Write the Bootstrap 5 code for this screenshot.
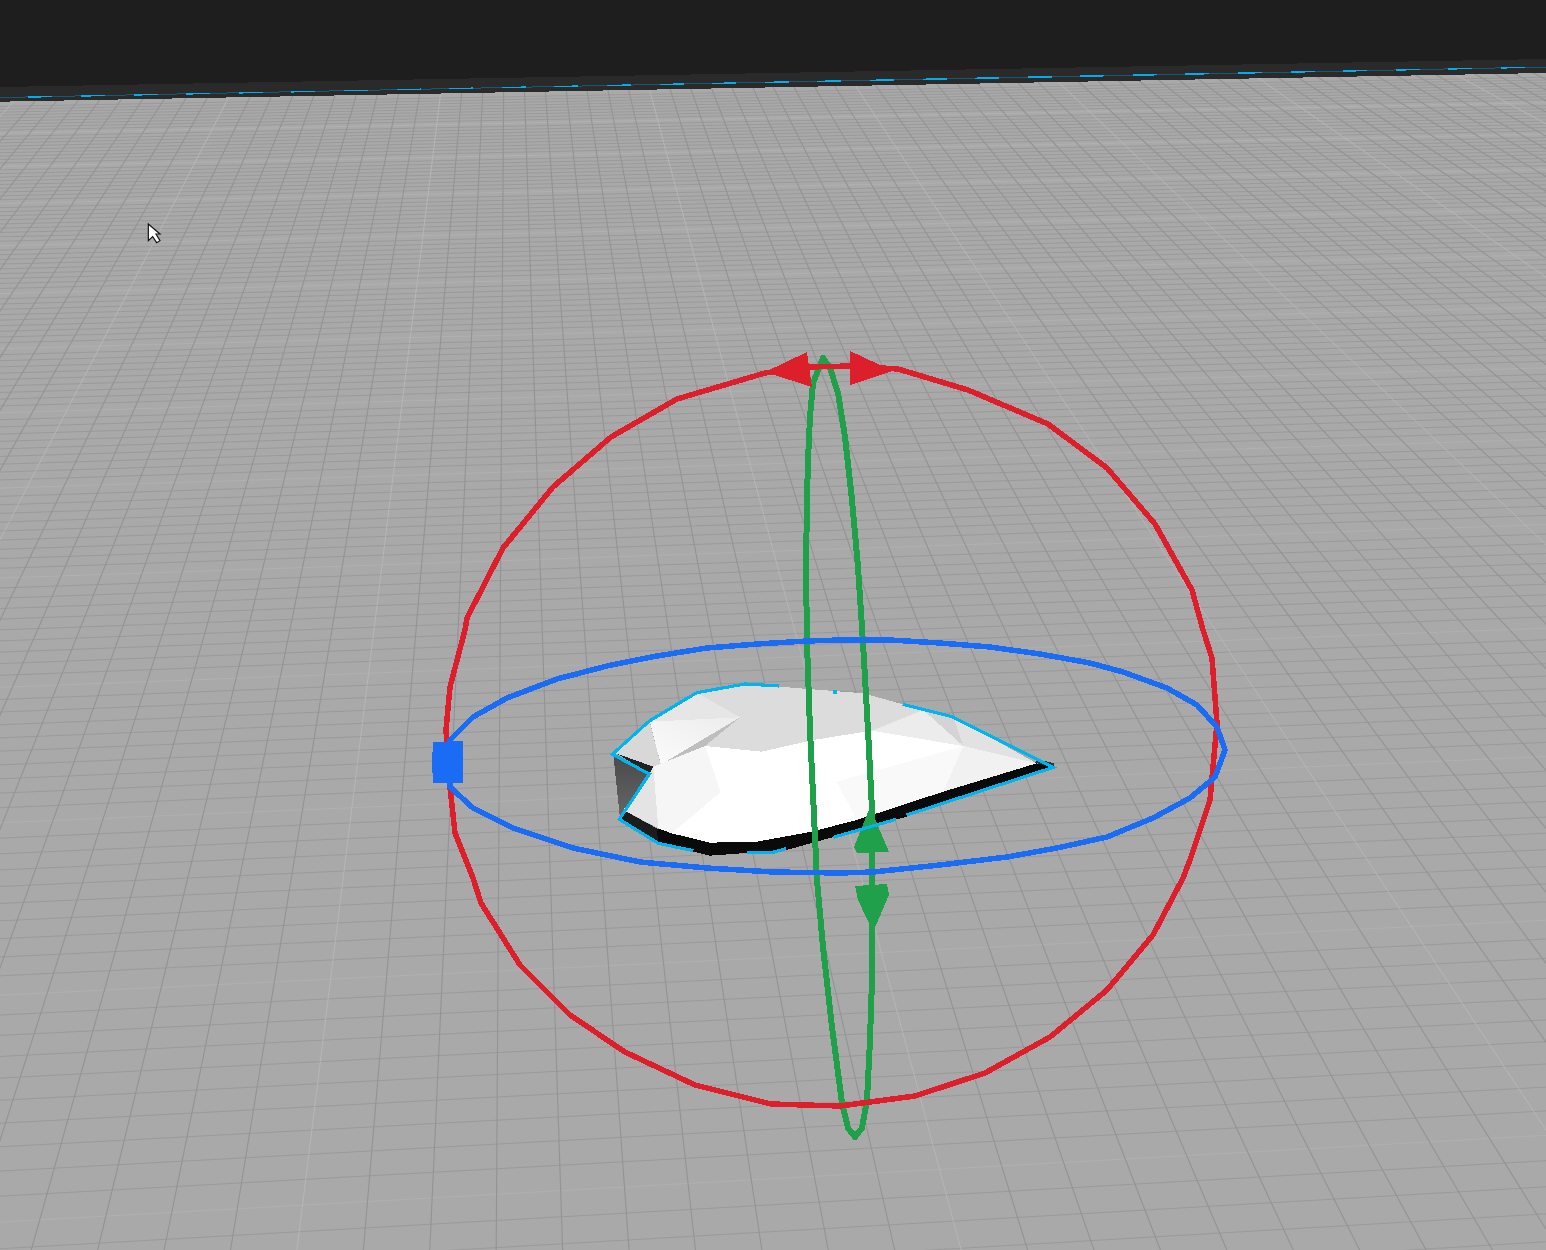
<!DOCTYPE html>
<html lang="en">
<head>
    <meta charset="UTF-8">
    <meta name="viewport" content="width=device-width, initial-scale=1">
    <title>3D Viewport</title>

    <!-- Bootstrap CSS -->
    <link href="https://cdn.jsdelivr.net/npm/bootstrap@5.3.0/dist/css/bootstrap.min.css" rel="stylesheet">

    <style>
        body { background-color: #1e1e1e; }
        .viewport-stage { width: 1546px; height: 1250px; }
        .viewport-svg { width: 1546px; height: 1250px; }
        .floor { fill: #a9a9a9; }
        .grid-across { stroke: #9a9a9a; stroke-width: 1; }
        .grid-across-major { stroke: #b2b2b2; stroke-width: 0.8; }
        .grid-away { stroke: #939393; stroke-width: 1.1; }
        .grid-away-major { stroke: #b8b8b8; stroke-width: 0.9; }
        .plate-top { fill: #1e1e1e; shape-rendering: crispEdges; }
        .plate-edge { fill: #2a2a2a; shape-rendering: crispEdges; }
        .edge-dim { stroke: #125a78; stroke-width: 1; fill: none; shape-rendering: crispEdges; }
        .edge-bright { stroke: #00aeef; stroke-width: 1.5; fill: none; stroke-dasharray: 24 28.6; shape-rendering: crispEdges; }
        .gizmo { fill: none; stroke-linejoin: round; shape-rendering: crispEdges; }
        .gizmo-red { stroke: #dc1f2a; stroke-width: 5.5; }
        .gizmo-blue { stroke: #1a6cf5; stroke-width: 5.5; }
        .gizmo-green { stroke: #21a04c; stroke-width: 6; }
        .fill-red { fill: #dc1f2a; shape-rendering: crispEdges; }
        .fill-blue { fill: #1a6cf5; shape-rendering: crispEdges; }
        .fill-green { fill: #21a04c; shape-rendering: crispEdges; }
        .mesh-face { shape-rendering: crispEdges; }
        .mesh-outline { fill: none; stroke: #00b4f0; stroke-width: 9.5; shape-rendering: crispEdges; stroke-linejoin: miter; }
    </style>
</head>
<body class="m-0 overflow-hidden">

    <div class="viewport-stage position-relative overflow-hidden">
        <svg class="viewport-svg d-block" viewBox="0 0 1546 1250" xmlns="http://www.w3.org/2000/svg">
            <defs>
                <linearGradient id="sideShade" x1="0" y1="0" x2="0" y2="1">
                    <stop offset="0" stop-color="#4a4a4a"></stop>
                    <stop offset="1" stop-color="#666"></stop>
                </linearGradient>
                <linearGradient id="creaseFace" x1="0" y1="1" x2="1" y2="0">
                    <stop offset="0" stop-color="#fbfbfb"></stop>
                    <stop offset="1" stop-color="#ececec"></stop>
                </linearGradient>
            </defs>
            <rect class="floor" x="0" y="60" width="1546" height="1190"></rect>
            <!-- grid lines get added here -->
            <g id="grid"></g>

            <!-- far edge of the plate -->
            <polygon class="plate-top" points="0,0 1546,0 1546,59 0,87"></polygon>
            <polygon class="plate-edge" points="0,87 1546,59 1546,73 0,101.7"></polygon>
            <line class="edge-dim" x1="0" y1="97.5" x2="1546" y2="67"></line>
            <line class="edge-bright" x1="28.5" y1="97" x2="1546" y2="67"></line>

            <!-- mesh, coordinates taken at 3x -->
            <g transform="translate(590 660) scale(0.33333)">
                <polygon class="mesh-face" fill="#0a0a0a" points="200,505 360,548 500,545 665,515 1340,310 1390,322 950,470 590,570 360,587 205,550"></polygon>
                <polygon class="mesh-face" fill="#1c1c1c" points="100,450 200,505 205,550 88,478"></polygon>
                <polygon class="mesh-face" fill="#222" points="72,275 85,262 190,320 178,342"></polygon>
                <polygon class="mesh-face" fill="url(#sideShade)" points="70,285 178,345 90,475"></polygon>
                <polygon class="mesh-face" fill="#333" points="1335,308 1345,298 1392,310 1390,322"></polygon>
                <polygon class="mesh-face" fill="#dcdcdc" points="320,98 465,72 820,100 1000,150 845,212 670,240 515,275 345,258 450,172"></polygon>
                <polygon class="mesh-face" fill="#e6e6e6" points="320,98 450,172 180,185"></polygon>
                <polygon class="mesh-face" fill="url(#creaseFace)" points="180,185 450,172 345,258 212,312"></polygon>
                <polygon class="mesh-face" fill="#bebebe" points="450,172 345,258 205,318"></polygon>
                <polygon class="mesh-face" fill="#d8d8d8" points="72,278 178,183 212,312 190,320"></polygon>
                <polygon class="mesh-face" fill="#ececec" points="845,212 1000,150 1120,258"></polygon>
                <polygon class="mesh-face" fill="#d4d4d4" points="1000,150 1090,170 1120,258"></polygon>
                <polygon class="mesh-face" fill="#e2e2e2" points="1090,170 1340,310 1120,258"></polygon>
                <polygon class="mesh-face" fill="#fff" points="245,520 392,397 345,258 515,275 670,240 845,212 1120,258 740,365 800,480 665,515 500,545 360,548"></polygon>
                <polygon class="mesh-face" fill="#f9f9f9" points="740,365 1120,258 1060,395 800,480"></polygon>
                <polygon class="mesh-face" fill="#f1f1f1" points="1120,258 1340,310 1060,395"></polygon>
                <polygon class="mesh-face" fill="#f6f6f6" points="190,320 345,258 392,397 245,520 205,505"></polygon>
                <polygon class="mesh-face" fill="#e4e4e4" points="178,342 190,320 205,505 100,450"></polygon>
            </g>

            <!-- green ring -->
            <polygon class="gizmo gizmo-green" points="823,358 813,383 810,417 808,460 807,500 806,567 807,643 810,730 817,880 823,947 832,1027 842,1103 848,1128 855,1137 862,1128 867,1100 870,1040 872,980 872,930 872,810 868,730 863,643 858,567 852,500 845,437 838,393 830,368"></polygon>
            <polygon class="fill-green" points="870,807 854,847 857,853 889,852"></polygon>
            <polygon class="fill-green" points="855,886 887,884 889,895 873,932 858,900"></polygon>

            <!-- red ring -->
            <polygon class="gizmo gizmo-red" points="450,687 465,630 467,618 503,548 553,487 611,437 677,399 765,373 810,367 850,366 898,369 968,390 1048,424 1107,468 1155,524 1192,590 1203,630 1212,658 1217,723 1210,800 1190,860 1183,878 1153,935 1107,990 1050,1037 985,1073 915,1096 840,1106 771,1104 695,1085 625,1052 570,1015 520,965 481,903 473,878 455,833 450,787 446,730"></polygon>
            <polygon class="fill-red" points="765,372 807,352 812,387"></polygon>
            <polygon class="fill-red" points="850,351 893,371 850,385"></polygon>

            <!-- blue ring -->
            <polygon class="gizmo gizmo-blue" points="450,740 473,717 507,698 557,679 607,666 657,656 707,648 757,644 807,641 840,640 890,640 940,643 990,647 1040,654 1090,663 1123,672 1167,688 1197,705 1217,727 1225,750 1215,777 1190,798 1153,818 1107,837 1057,848 1007,857 940,865 873,872 840,873 773,872 707,868 640,862 573,848 513,828 473,808 450,787"></polygon>
            <polygon class="fill-blue" points="433,742 463,741 463,783 433,783 432,762"></polygon>

            <!-- selection outline of the mesh, broken where it is hidden -->
            <g transform="translate(590 660) scale(0.33333)">
                <polyline class="mesh-outline" points="465,72 320,98 178,183 67,283 178,342 88,478 205,550 310,572"></polyline>
                <polyline class="mesh-outline" points="465,72 568,78"></polyline>
                <polyline class="mesh-outline" points="728,96 740,96"></polyline>
                <polyline class="mesh-outline" points="938,133 1085,170 1390,322 950,465"></polyline>
                <polyline class="mesh-outline" points="918,478 730,532"></polyline>
                <polyline class="mesh-outline" points="470,578 545,578 588,566"></polyline>
            </g>

            <!-- mouse pointer -->
            <g transform="translate(0 50) scale(0.33333)">
                <polygon fill="#fff" stroke="#111" stroke-width="3.5" points="445,522 445,572 458,560 470,578 480,572 468,552 480,552"></polygon>
            </g>
        </svg>
    </div>

    <script>
        // Perspective grid: both line families run to a vanishing point
        const grid = document.getElementById("grid");
        const svgNs = "http://www.w3.org/2000/svg";

        function addLine(x1, y1, x2, y2, cls) {
            const line = document.createElementNS(svgNs, "line");
            line.setAttribute("x1", x1);
            line.setAttribute("y1", y1);
            line.setAttribute("x2", x2);
            line.setAttribute("y2", y2);
            line.setAttribute("class", cls);
            grid.appendChild(line);
        }

        // Lines going across, spaced by inverse depth
        const acrossVp = { x: 30000, y: -460 };
        const horizon = 441;
        const uMajor = 6.013e-4;
        const uStep = 9.5e-6;
        for (let i = -10; i < 130; i++) {
            const u = uMajor + i * uStep;
            const y0 = 1 / u - horizon;
            const y1 = y0 + (acrossVp.y - y0) / acrossVp.x * 1546;
            addLine(0, y0, 1546, y1, i % 10 === 0 ? "grid-across-major" : "grid-across");
        }

        // Lines going away, evenly spaced on the row y=1000
        const awayVpX = 507;
        for (let i = -40; i < 60; i++) {
            const xAt1000 = 328 + i * 56.6;
            const top = awayVpX + (xAt1000 - awayVpX) * (60 + horizon) / 1441;
            const bottom = awayVpX + (xAt1000 - awayVpX) * (1250 + horizon) / 1441;
            addLine(top, 60, bottom, 1250, i % 10 === 0 ? "grid-away-major" : "grid-away");
        }
    </script>

    <!-- Bootstrap JS -->
    <script src="https://cdn.jsdelivr.net/npm/bootstrap@5.3.0/dist/js/bootstrap.bundle.min.js"></script>

</body>
</html>
